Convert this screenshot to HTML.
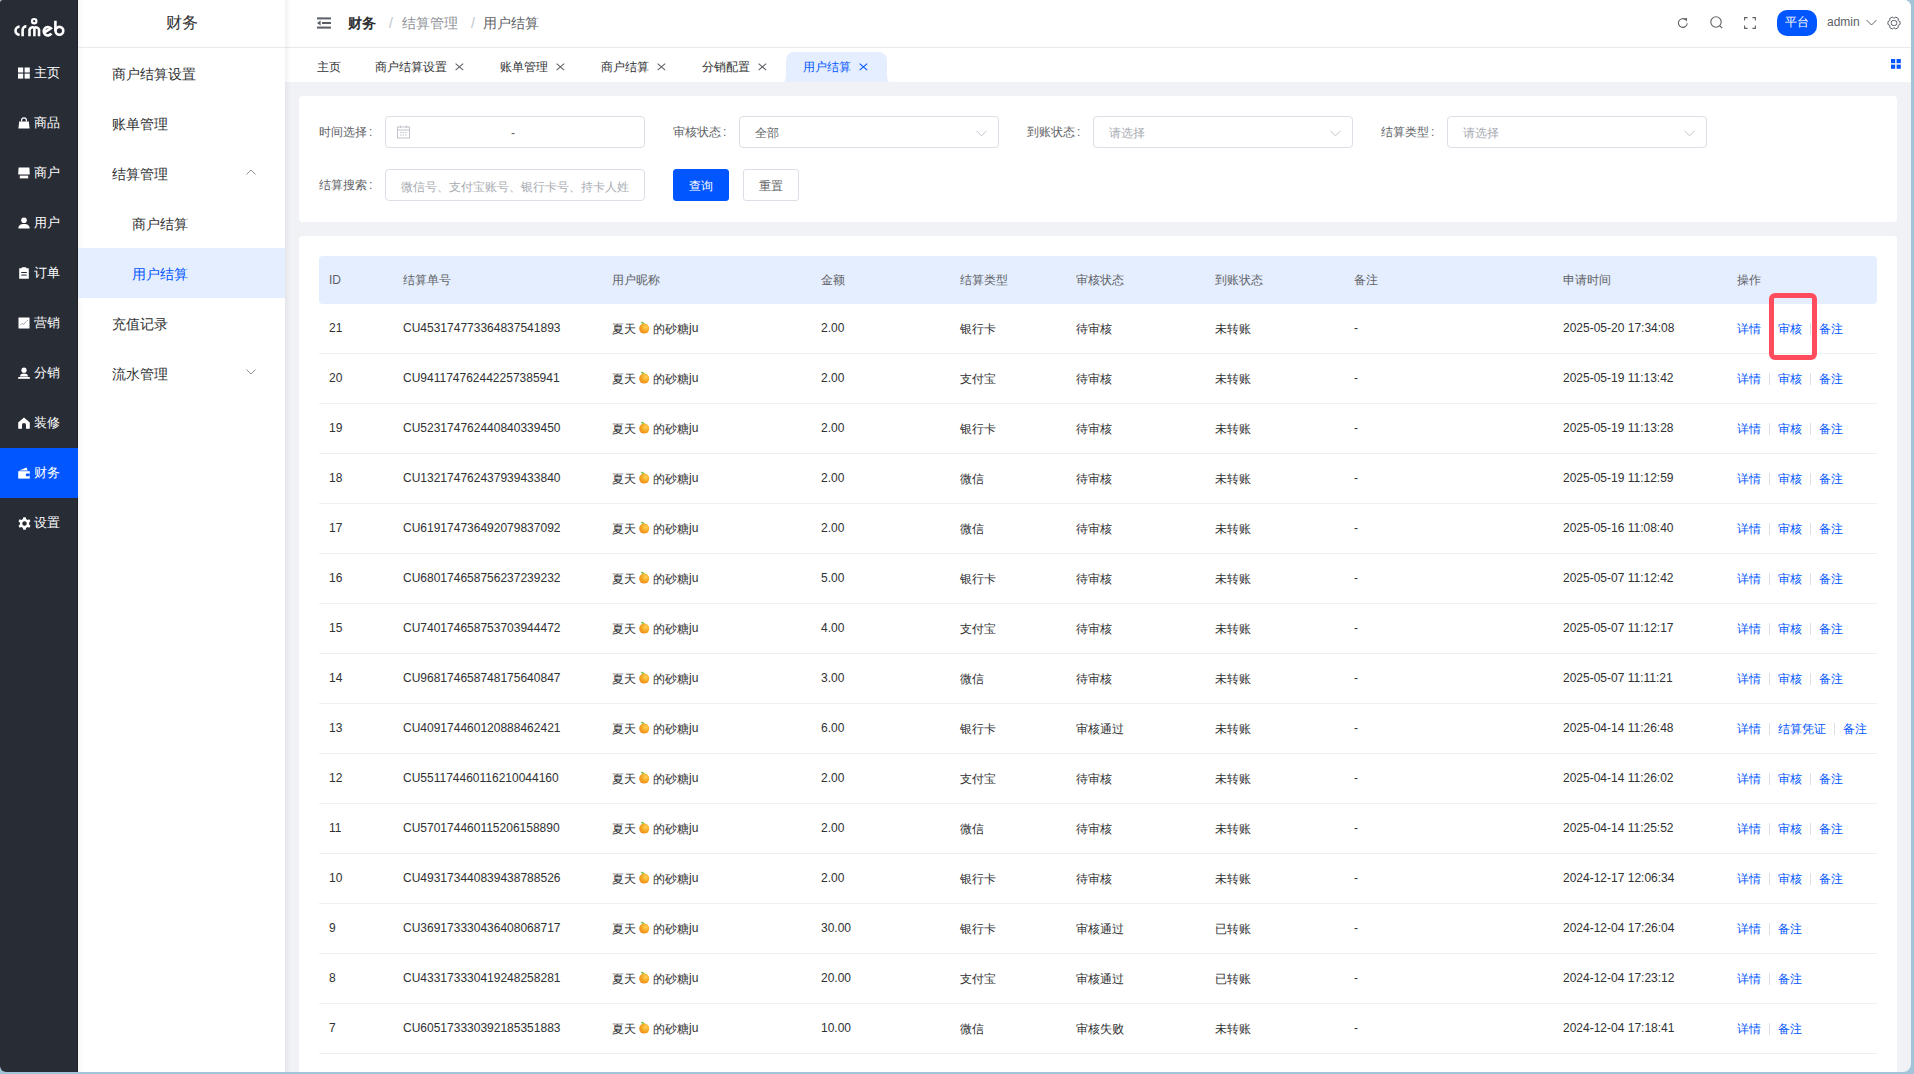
<!DOCTYPE html>
<html><head><meta charset="utf-8">
<style>
*{box-sizing:border-box;margin:0;padding:0}
html,body{width:1914px;height:1074px;overflow:hidden;background:#a2c3d8;font-family:"Liberation Sans",sans-serif;}
#win{position:absolute;left:0;top:0;width:1911px;height:1072px;background:#f0f2f5;overflow:hidden;border-radius:3px 7px 8px 6px}
#side{position:absolute;left:0;top:0;width:78px;height:1072px;background:#282c35;border-right:1px solid #1d2027}
.si{position:absolute;left:0;width:77px;height:50px;color:#fff;font-size:13px;line-height:50px;}
.si svg{position:absolute;left:18px;top:19px}
.si span{position:absolute;left:34px;top:0}
.si.on{background:#0256ff;width:78px}
#sub{position:absolute;left:78px;top:0;width:207px;height:1072px;background:#fff;background-image:linear-gradient(to right,rgba(0,0,0,0.03),rgba(0,0,0,0) 5px)}
#sub .ttl{position:absolute;left:0;top:0;width:207px;height:48px;line-height:46px;text-align:center;font-size:16px;color:#303133;border-bottom:1px solid #e8eaef}
.mi{position:absolute;left:0;width:207px;height:50px;line-height:50px;font-size:14px;color:#303133}
.mi span{position:absolute;left:34px;top:1px}
.mi.l2 span{left:54px}
.mi.on{background:#e5eeff;color:#0256ff}
.mi svg{position:absolute;left:168px;top:21px}
#hdr{position:absolute;left:286px;top:0;width:1625px;height:48px;background:#fff;border-bottom:1px solid #e8eaf0}
#hdr .bc{position:absolute;top:15px;font-size:14px;line-height:16px;white-space:nowrap}
#tabs{position:absolute;left:286px;top:48px;width:1625px;height:34px;background:#fff}
.tab{position:absolute;top:0;height:34px;font-size:12px;color:#303133}
.tab span{position:absolute;top:12px;line-height:14px;white-space:nowrap}
.tab .x{position:absolute;top:15px}
.card{position:absolute;left:299px;width:1598px;background:#fff;border-radius:4px}
.lbl{position:absolute;font-size:12px;color:#606266;line-height:14px;white-space:nowrap}
.inp{position:absolute;height:32px;border:1px solid #dcdfe6;border-radius:4px;background:#fff;font-size:12px;line-height:30px;white-space:nowrap}
.inp span{position:absolute;left:15px;top:1px}
.ph{color:#a8abb2}
.arr{position:absolute;right:11px;top:13px}
.btn{position:absolute;height:32px;border-radius:3px;font-size:12px;line-height:32px;text-align:center}
table{position:absolute;left:319px;top:256px;border-collapse:separate;border-spacing:0;table-layout:fixed;width:1558px;font-size:12px}
th{height:48px;background:#e5eeff;color:#606266;font-weight:normal;text-align:left;padding:0 10px;}
th:first-child{border-radius:4px 0 0 4px}
th:last-child{border-radius:0 4px 4px 0}
td{height:50px;border-bottom:1px solid #f0f0f0;color:#303133;text-align:left;padding:0 10px 1px;white-space:nowrap}
.org{vertical-align:-2px;margin:0 3px 0 3px}
.lk{color:#0256ff}
.c{position:relative;top:1px}
.dv{display:inline-block;width:1px;height:12px;background:#dcdfe6;margin:0 8px;vertical-align:-3px}
#hl{position:absolute;left:1769px;top:293px;width:48px;height:67px;border:5px solid #ff4d5e;border-radius:6px}
</style></head><body>
<div id="win">
  <div id="side">
    <svg style="position:absolute;left:0;top:0" width="78" height="47" viewBox="0 0 78 47">
      <g fill="none" stroke="#fff" stroke-width="2.6" stroke-linecap="butt">
        <path d="M19.6 26.6 A4.1 4.1 0 0 0 19.6 34.8"/>
        <path d="M22.6 36.2 V30 A3.6 3.6 0 0 1 26.4 26.4"/>
        <path d="M29.5 36.2 V29.6 A3.2 3.2 0 0 1 34.4 27.8 A3.2 3.2 0 0 1 39 29.6 V36.2 M34.4 28 V36.2"/>
        <circle cx="34.2" cy="21.2" r="2.2" stroke-width="2.2"/>
        <path d="M44.2 32.6 L50.8 28.2 A4.2 4.2 0 1 0 51.4 33.6"/>
        <path d="M55.4 20.8 V31"/><circle cx="59.4" cy="30.8" r="3.9"/>
      </g>
    </svg>
    <div class="si" style="top:48px"><svg width="12" height="12" viewBox="0 0 12 12"><rect x="0" y="0.5" width="5.2" height="5" fill="#fff"/><rect x="6.6" y="0.5" width="5.2" height="5" fill="#fff"/><rect x="0" y="6.6" width="5.2" height="5" fill="#fff"/><rect x="6.6" y="6.6" width="5.2" height="5" fill="#fff"/></svg><span>主页</span></div>
<div class="si" style="top:98px"><svg width="12" height="12" viewBox="0 0 12 12"><path d="M3.6 4.6 V3.2 A2.4 2.4 0 0 1 8.4 3.2 V4.6" fill="none" stroke="#fff" stroke-width="1.2"/><path d="M1.2 4.4 H10.8 L11.6 11.6 H0.4Z" fill="#fff"/></svg><span>商品</span></div>
<div class="si" style="top:148px"><svg width="12" height="12" viewBox="0 0 12 12"><path d="M0.6 0.6 H11.4 L11.8 7.6 H0.2Z" fill="#fff"/><rect x="1.8" y="8.6" width="8.4" height="2.8" fill="#fff"/></svg><span>商户</span></div>
<div class="si" style="top:198px"><svg width="12" height="12" viewBox="0 0 12 12"><circle cx="6" cy="3.2" r="2.8" fill="#fff"/><path d="M0.3 11.6 C0.3 8.2 2.6 6.9 6 6.9 C9.4 6.9 11.7 8.2 11.7 11.6Z" fill="#fff"/></svg><span>用户</span></div>
<div class="si" style="top:248px"><svg width="12" height="12" viewBox="0 0 12 12"><path d="M1.2 1.2 H3.8 V0.2 H8.2 V1.2 H10.8 V11.8 H1.2Z" fill="#fff"/><rect x="3.2" y="5" width="5.6" height="1" fill="#282c35"/><rect x="3.2" y="7.6" width="5.6" height="1" fill="#282c35"/></svg><span>订单</span></div>
<div class="si" style="top:298px"><svg width="12" height="12" viewBox="0 0 12 12"><rect x="0.5" y="0.5" width="11" height="11" fill="#fff"/><path d="M2 8.4 L4 6.4 L5.6 7.4 L8.4 4.4" fill="none" stroke="#7a7e86" stroke-width="0.7"/><circle cx="9.6" cy="3.6" r="0.5" fill="#7a7e86"/></svg><span>营销</span></div>
<div class="si" style="top:348px"><svg width="12" height="12" viewBox="0 0 12 12"><circle cx="6" cy="3.2" r="2.6" fill="#fff"/><path d="M2 9.4 C2 7.2 3.6 6.4 6 6.4 C8.4 6.4 10 7.2 10 9.4Z" fill="#fff"/><rect x="0.2" y="10" width="11.6" height="1.8" fill="#fff"/></svg><span>分销</span></div>
<div class="si" style="top:398px"><svg width="12" height="12" viewBox="0 0 12 12"><path d="M6 0.4 L11.8 5.4 V11.8 H8 V8 A2 2 0 0 0 4 8 V11.8 H0.2 V5.4Z" fill="#fff"/></svg><span>装修</span></div>
<div class="si on" style="top:448px"><svg width="12" height="12" viewBox="0 0 12 12"><path d="M1 3.6 L8.6 0.6 L9.6 3.6Z" fill="#fff"/><path d="M0.2 4.2 H11.8 V11.6 H0.2Z" fill="#fff"/><rect x="7.8" y="6.6" width="4" height="2.6" rx="1" fill="#0256ff"/></svg><span>财务</span></div>
<div class="si" style="top:498px"><svg width="13" height="13" viewBox="0 0 13 13"><path d="M5.3 0.3 H7.7 L8.1 2.1 L9.6 2.9 L11.3 2.2 L12.5 4.3 L11.1 5.5 V7.5 L12.5 8.7 L11.3 10.8 L9.6 10.1 L8.1 10.9 L7.7 12.7 H5.3 L4.9 10.9 L3.4 10.1 L1.7 10.8 L0.5 8.7 L1.9 7.5 V5.5 L0.5 4.3 L1.7 2.2 L3.4 2.9 L4.9 2.1Z" fill="#fff"/><circle cx="6.5" cy="6.5" r="2.2" fill="#282c35"/></svg><span>设置</span></div>
  </div>
  <div id="sub">
    <div class="ttl">财务</div>
    <div class="mi " style="top:48px"><span>商户结算设置</span></div>
<div class="mi " style="top:98px"><span>账单管理</span></div>
<div class="mi " style="top:148px"><span>结算管理</span><svg width="10" height="6" viewBox="0 0 10 6"><path d="M0.5 5.5 L5 1 L9.5 5.5" fill="none" stroke="#909399" stroke-width="1"/></svg></div>
<div class="mi l2" style="top:198px"><span>商户结算</span></div>
<div class="mi l2 on" style="top:248px"><span>用户结算</span></div>
<div class="mi " style="top:298px"><span>充值记录</span></div>
<div class="mi " style="top:348px"><span>流水管理</span><svg width="10" height="6" viewBox="0 0 10 6"><path d="M0.5 0.5 L5 5 L9.5 0.5" fill="none" stroke="#909399" stroke-width="1"/></svg></div>
  </div>
  <div id="hdr">
    
<svg style="position:absolute;left:31px;top:17px" width="14" height="12" viewBox="0 0 14 12"><g fill="#5a5e66"><rect x="0" y="0.4" width="14" height="2"/><rect x="5" y="5" width="9" height="2"/><rect x="0" y="9.6" width="14" height="2"/><path d="M0 6 L3.6 3.4 V8.6Z"/></g></svg>
<div class="bc" style="left:62px;color:#303133;font-weight:bold">财务</div>
<div class="bc" style="left:103px;color:#c0c4cc">/</div>
<div class="bc" style="left:116px;color:#909399">结算管理</div>
<div class="bc" style="left:185px;color:#c0c4cc">/</div>
<div class="bc" style="left:197px;color:#606266">用户结算</div>
<svg style="position:absolute;left:1391px;top:17px" width="12" height="12" viewBox="0 0 12 12"><path d="M10.2 6.2 A4.4 4.4 0 1 1 8.6 2.6" fill="none" stroke="#606266" stroke-width="1.1"/><path d="M6.6 1.4 L10.2 1 L9.8 4.6Z" fill="#606266"/></svg>
<svg style="position:absolute;left:1424px;top:16px" width="13" height="13" viewBox="0 0 13 13"><circle cx="6" cy="6" r="5.2" fill="none" stroke="#606266" stroke-width="1.1"/><path d="M9.8 9.8 L12.2 12.2" stroke="#606266" stroke-width="1.2"/></svg>
<svg style="position:absolute;left:1458px;top:17px" width="12" height="12" viewBox="0 0 12 12"><g fill="none" stroke="#606266" stroke-width="1.1"><path d="M0.6 3.6 V0.6 H3.6"/><path d="M8.4 0.6 H11.4 V3.6"/><path d="M11.4 8.4 V11.4 H8.4"/><path d="M3.6 11.4 H0.6 V8.4"/></g></svg>
<div style="position:absolute;left:1491px;top:10px;width:40px;height:26px;border-radius:10px;background:#0256ff;color:#fff;font-size:12px;line-height:25px;text-align:center">平台</div>
<div style="position:absolute;left:1541px;top:15px;font-size:12px;line-height:14px;color:#606266">admin</div>
<svg style="position:absolute;left:1580px;top:19px" width="11" height="7" viewBox="0 0 11 7"><path d="M0.5 1 L5.5 6 L10.5 1" fill="none" stroke="#606266" stroke-width="1"/></svg>
<svg style="position:absolute;left:1601px;top:16px" width="14" height="14" viewBox="0 0 14 14"><path d="M11.33 9.30 L13.04 8.39 L13.04 5.61 L11.33 4.70 L11.16 4.40 L11.23 2.47 L8.81 1.07 L7.17 2.10 L6.83 2.10 L5.19 1.07 L2.77 2.47 L2.84 4.40 L2.67 4.70 L0.96 5.61 L0.96 8.39 L2.67 9.30 L2.84 9.60 L2.77 11.53 L5.19 12.93 L6.83 11.90 L7.17 11.90 L8.81 12.93 L11.23 11.53 L11.16 9.60Z" fill="none" stroke="#5a5e66" stroke-width="1" stroke-linejoin="round"/><rect x="4.3" y="4.5" width="5.4" height="5" rx="2" fill="none" stroke="#5a5e66" stroke-width="1"/></svg>

  </div>
  <div id="tabs">
    <div class="tab" style="left:14px;width:58px"><span style="left:17px">主页</span></div>
<div class="tab" style="left:72px;width:125px"><span style="left:17px">商户结算设置</span><svg class="x" style="left:97px" width="9" height="8" viewBox="0 0 9 8"><path d="M0.6 0.6 L8.2 7.2 M8.2 0.6 L0.6 7.2" stroke="#606266" stroke-width="1.1"/></svg></div>
<div class="tab" style="left:197px;width:101px"><span style="left:17px">账单管理</span><svg class="x" style="left:73px" width="9" height="8" viewBox="0 0 9 8"><path d="M0.6 0.6 L8.2 7.2 M8.2 0.6 L0.6 7.2" stroke="#606266" stroke-width="1.1"/></svg></div>
<div class="tab" style="left:298px;width:101px"><span style="left:17px">商户结算</span><svg class="x" style="left:73px" width="9" height="8" viewBox="0 0 9 8"><path d="M0.6 0.6 L8.2 7.2 M8.2 0.6 L0.6 7.2" stroke="#606266" stroke-width="1.1"/></svg></div>
<div class="tab" style="left:399px;width:101px"><span style="left:17px">分销配置</span><svg class="x" style="left:73px" width="9" height="8" viewBox="0 0 9 8"><path d="M0.6 0.6 L8.2 7.2 M8.2 0.6 L0.6 7.2" stroke="#606266" stroke-width="1.1"/></svg></div>
<div class="tab" style="left:500px;width:101px;color:#0256ff"><svg style="position:absolute;left:-3px;top:4px" width="107" height="30" viewBox="0 0 107 30"><path d="M0 30 C2.6 30 3 26 3 20 V8 A8 8 0 0 1 11 0 H96 A8 8 0 0 1 104 8 V20 C104 26 104.4 30 107 30Z" fill="#e5eeff"/></svg><span style="left:17px">用户结算</span><svg class="x" style="left:73px" width="9" height="8" viewBox="0 0 9 8"><path d="M0.6 0.6 L8.2 7.2 M8.2 0.6 L0.6 7.2" stroke="#0256ff" stroke-width="1.1"/></svg></div>
<svg style="position:absolute;left:1605px;top:11px" width="10" height="10" viewBox="0 0 10 10"><g fill="#0256ff"><rect x="0" y="0" width="4.2" height="4.2"/><rect x="5.6" y="0" width="4.2" height="4.2"/><rect x="0" y="5.6" width="4.2" height="4.2"/><rect x="5.6" y="5.6" width="4.2" height="4.2"/></g></svg>
  </div>
  <div class="card" style="top:96px;height:126px">
  </div>
  <div class="lbl" style="left:319px;top:125px">时间选择<span style="margin-left:2px">:</span></div>
<div class="inp" style="left:385px;top:116px;width:260px"><svg style="position:absolute;left:11px;top:8px" width="13" height="14" viewBox="0 0 13 14"><g fill="none" stroke="#c0c4cc" stroke-width="1"><rect x="0.5" y="2" width="12" height="11"/><path d="M0.5 5 H12.5 M3.5 0.5 V3 M9.5 0.5 V3"/><path d="M3 7.5 H10 M3 10 H10" stroke-dasharray="1.5 1"/></g></svg><span style="left:125px;color:#606266">-</span></div>
<div class="lbl" style="left:673px;top:125px">审核状态<span style="margin-left:2px">:</span></div>
<div class="inp" style="left:739px;top:116px;width:260px"><span style="color:#606266">全部</span><svg class="arr" width="11" height="7" viewBox="0 0 11 7"><path d="M0.5 0.8 L5.5 5.8 L10.5 0.8" fill="none" stroke="#c0c4cc" stroke-width="1"/></svg></div>
<div class="lbl" style="left:1027px;top:125px">到账状态<span style="margin-left:2px">:</span></div>
<div class="inp" style="left:1093px;top:116px;width:260px"><span class="ph">请选择</span><svg class="arr" width="11" height="7" viewBox="0 0 11 7"><path d="M0.5 0.8 L5.5 5.8 L10.5 0.8" fill="none" stroke="#c0c4cc" stroke-width="1"/></svg></div>
<div class="lbl" style="left:1381px;top:125px">结算类型<span style="margin-left:2px">:</span></div>
<div class="inp" style="left:1447px;top:116px;width:260px"><span class="ph">请选择</span><svg class="arr" width="11" height="7" viewBox="0 0 11 7"><path d="M0.5 0.8 L5.5 5.8 L10.5 0.8" fill="none" stroke="#c0c4cc" stroke-width="1"/></svg></div>
<div class="lbl" style="left:319px;top:178px">结算搜索<span style="margin-left:2px">:</span></div>
<div class="inp" style="left:385px;top:169px;width:260px"><span class="ph" style="top:2px">微信号、支付宝账号、银行卡号、持卡人姓</span></div>
<div class="btn" style="left:673px;top:169px;width:56px;background:#0256ff;color:#fff;border:1px solid #0256ff">查询</div>
<div class="btn" style="left:743px;top:169px;width:56px;background:#fff;color:#606266;border:1px solid #dcdfe6">重置</div>
  <div class="card" style="top:236px;height:840px"></div>
  <table>
    <colgroup><col style="width:74px"><col style="width:209px"><col style="width:209px"><col style="width:139px"><col style="width:116px"><col style="width:139px"><col style="width:139px"><col style="width:209px"><col style="width:174px"><col style="width:150px"></colgroup>
    <thead><tr><th>ID</th><th>结算单号</th><th>用户昵称</th><th>金额</th><th>结算类型</th><th>审核状态</th><th>到账状态</th><th>备注</th><th>申请时间</th><th>操作</th></tr></thead>
    <tbody>
<tr><td>21</td><td>CU453174773364837541893</td><td><span class="c">夏天</span><svg class="org" width="11" height="13" viewBox="0 0 11 13"><defs><radialGradient id="og" cx="0.65" cy="0.35" r="0.7"><stop offset="0" stop-color="#ffd45a"/><stop offset="0.6" stop-color="#f5a623"/><stop offset="1" stop-color="#f08a1c"/></radialGradient></defs><circle cx="5.2" cy="7.6" r="5" fill="url(#og)"/><path d="M1.6 1 C3.2 0.4 5 1.2 5.6 2.8 C4 3.2 2.4 2.6 1.6 1Z" fill="#7cc242"/></svg><span class="c">的砂糖</span>ju</td><td>2.00</td><td><span class="c">银行卡</span></td><td><span class="c">待审核</span></td><td><span class="c">未转账</span></td><td>-</td><td>2025-05-20 17:34:08</td><td><span class="lk"><span class="c">详情</span></span><i class="dv"></i><span class="lk"><span class="c">审核</span></span><i class="dv"></i><span class="lk"><span class="c">备注</span></span></td></tr>
<tr><td>20</td><td>CU941174762442257385941</td><td><span class="c">夏天</span><svg class="org" width="11" height="13" viewBox="0 0 11 13"><defs><radialGradient id="og" cx="0.65" cy="0.35" r="0.7"><stop offset="0" stop-color="#ffd45a"/><stop offset="0.6" stop-color="#f5a623"/><stop offset="1" stop-color="#f08a1c"/></radialGradient></defs><circle cx="5.2" cy="7.6" r="5" fill="url(#og)"/><path d="M1.6 1 C3.2 0.4 5 1.2 5.6 2.8 C4 3.2 2.4 2.6 1.6 1Z" fill="#7cc242"/></svg><span class="c">的砂糖</span>ju</td><td>2.00</td><td><span class="c">支付宝</span></td><td><span class="c">待审核</span></td><td><span class="c">未转账</span></td><td>-</td><td>2025-05-19 11:13:42</td><td><span class="lk"><span class="c">详情</span></span><i class="dv"></i><span class="lk"><span class="c">审核</span></span><i class="dv"></i><span class="lk"><span class="c">备注</span></span></td></tr>
<tr><td>19</td><td>CU523174762440840339450</td><td><span class="c">夏天</span><svg class="org" width="11" height="13" viewBox="0 0 11 13"><defs><radialGradient id="og" cx="0.65" cy="0.35" r="0.7"><stop offset="0" stop-color="#ffd45a"/><stop offset="0.6" stop-color="#f5a623"/><stop offset="1" stop-color="#f08a1c"/></radialGradient></defs><circle cx="5.2" cy="7.6" r="5" fill="url(#og)"/><path d="M1.6 1 C3.2 0.4 5 1.2 5.6 2.8 C4 3.2 2.4 2.6 1.6 1Z" fill="#7cc242"/></svg><span class="c">的砂糖</span>ju</td><td>2.00</td><td><span class="c">银行卡</span></td><td><span class="c">待审核</span></td><td><span class="c">未转账</span></td><td>-</td><td>2025-05-19 11:13:28</td><td><span class="lk"><span class="c">详情</span></span><i class="dv"></i><span class="lk"><span class="c">审核</span></span><i class="dv"></i><span class="lk"><span class="c">备注</span></span></td></tr>
<tr><td>18</td><td>CU132174762437939433840</td><td><span class="c">夏天</span><svg class="org" width="11" height="13" viewBox="0 0 11 13"><defs><radialGradient id="og" cx="0.65" cy="0.35" r="0.7"><stop offset="0" stop-color="#ffd45a"/><stop offset="0.6" stop-color="#f5a623"/><stop offset="1" stop-color="#f08a1c"/></radialGradient></defs><circle cx="5.2" cy="7.6" r="5" fill="url(#og)"/><path d="M1.6 1 C3.2 0.4 5 1.2 5.6 2.8 C4 3.2 2.4 2.6 1.6 1Z" fill="#7cc242"/></svg><span class="c">的砂糖</span>ju</td><td>2.00</td><td><span class="c">微信</span></td><td><span class="c">待审核</span></td><td><span class="c">未转账</span></td><td>-</td><td>2025-05-19 11:12:59</td><td><span class="lk"><span class="c">详情</span></span><i class="dv"></i><span class="lk"><span class="c">审核</span></span><i class="dv"></i><span class="lk"><span class="c">备注</span></span></td></tr>
<tr><td>17</td><td>CU619174736492079837092</td><td><span class="c">夏天</span><svg class="org" width="11" height="13" viewBox="0 0 11 13"><defs><radialGradient id="og" cx="0.65" cy="0.35" r="0.7"><stop offset="0" stop-color="#ffd45a"/><stop offset="0.6" stop-color="#f5a623"/><stop offset="1" stop-color="#f08a1c"/></radialGradient></defs><circle cx="5.2" cy="7.6" r="5" fill="url(#og)"/><path d="M1.6 1 C3.2 0.4 5 1.2 5.6 2.8 C4 3.2 2.4 2.6 1.6 1Z" fill="#7cc242"/></svg><span class="c">的砂糖</span>ju</td><td>2.00</td><td><span class="c">微信</span></td><td><span class="c">待审核</span></td><td><span class="c">未转账</span></td><td>-</td><td>2025-05-16 11:08:40</td><td><span class="lk"><span class="c">详情</span></span><i class="dv"></i><span class="lk"><span class="c">审核</span></span><i class="dv"></i><span class="lk"><span class="c">备注</span></span></td></tr>
<tr><td>16</td><td>CU680174658756237239232</td><td><span class="c">夏天</span><svg class="org" width="11" height="13" viewBox="0 0 11 13"><defs><radialGradient id="og" cx="0.65" cy="0.35" r="0.7"><stop offset="0" stop-color="#ffd45a"/><stop offset="0.6" stop-color="#f5a623"/><stop offset="1" stop-color="#f08a1c"/></radialGradient></defs><circle cx="5.2" cy="7.6" r="5" fill="url(#og)"/><path d="M1.6 1 C3.2 0.4 5 1.2 5.6 2.8 C4 3.2 2.4 2.6 1.6 1Z" fill="#7cc242"/></svg><span class="c">的砂糖</span>ju</td><td>5.00</td><td><span class="c">银行卡</span></td><td><span class="c">待审核</span></td><td><span class="c">未转账</span></td><td>-</td><td>2025-05-07 11:12:42</td><td><span class="lk"><span class="c">详情</span></span><i class="dv"></i><span class="lk"><span class="c">审核</span></span><i class="dv"></i><span class="lk"><span class="c">备注</span></span></td></tr>
<tr><td>15</td><td>CU740174658753703944472</td><td><span class="c">夏天</span><svg class="org" width="11" height="13" viewBox="0 0 11 13"><defs><radialGradient id="og" cx="0.65" cy="0.35" r="0.7"><stop offset="0" stop-color="#ffd45a"/><stop offset="0.6" stop-color="#f5a623"/><stop offset="1" stop-color="#f08a1c"/></radialGradient></defs><circle cx="5.2" cy="7.6" r="5" fill="url(#og)"/><path d="M1.6 1 C3.2 0.4 5 1.2 5.6 2.8 C4 3.2 2.4 2.6 1.6 1Z" fill="#7cc242"/></svg><span class="c">的砂糖</span>ju</td><td>4.00</td><td><span class="c">支付宝</span></td><td><span class="c">待审核</span></td><td><span class="c">未转账</span></td><td>-</td><td>2025-05-07 11:12:17</td><td><span class="lk"><span class="c">详情</span></span><i class="dv"></i><span class="lk"><span class="c">审核</span></span><i class="dv"></i><span class="lk"><span class="c">备注</span></span></td></tr>
<tr><td>14</td><td>CU968174658748175640847</td><td><span class="c">夏天</span><svg class="org" width="11" height="13" viewBox="0 0 11 13"><defs><radialGradient id="og" cx="0.65" cy="0.35" r="0.7"><stop offset="0" stop-color="#ffd45a"/><stop offset="0.6" stop-color="#f5a623"/><stop offset="1" stop-color="#f08a1c"/></radialGradient></defs><circle cx="5.2" cy="7.6" r="5" fill="url(#og)"/><path d="M1.6 1 C3.2 0.4 5 1.2 5.6 2.8 C4 3.2 2.4 2.6 1.6 1Z" fill="#7cc242"/></svg><span class="c">的砂糖</span>ju</td><td>3.00</td><td><span class="c">微信</span></td><td><span class="c">待审核</span></td><td><span class="c">未转账</span></td><td>-</td><td>2025-05-07 11:11:21</td><td><span class="lk"><span class="c">详情</span></span><i class="dv"></i><span class="lk"><span class="c">审核</span></span><i class="dv"></i><span class="lk"><span class="c">备注</span></span></td></tr>
<tr><td>13</td><td>CU409174460120888462421</td><td><span class="c">夏天</span><svg class="org" width="11" height="13" viewBox="0 0 11 13"><defs><radialGradient id="og" cx="0.65" cy="0.35" r="0.7"><stop offset="0" stop-color="#ffd45a"/><stop offset="0.6" stop-color="#f5a623"/><stop offset="1" stop-color="#f08a1c"/></radialGradient></defs><circle cx="5.2" cy="7.6" r="5" fill="url(#og)"/><path d="M1.6 1 C3.2 0.4 5 1.2 5.6 2.8 C4 3.2 2.4 2.6 1.6 1Z" fill="#7cc242"/></svg><span class="c">的砂糖</span>ju</td><td>6.00</td><td><span class="c">银行卡</span></td><td><span class="c">审核通过</span></td><td><span class="c">未转账</span></td><td>-</td><td>2025-04-14 11:26:48</td><td><span class="lk"><span class="c">详情</span></span><i class="dv"></i><span class="lk"><span class="c">结算凭证</span></span><i class="dv"></i><span class="lk"><span class="c">备注</span></span></td></tr>
<tr><td>12</td><td>CU551174460116210044160</td><td><span class="c">夏天</span><svg class="org" width="11" height="13" viewBox="0 0 11 13"><defs><radialGradient id="og" cx="0.65" cy="0.35" r="0.7"><stop offset="0" stop-color="#ffd45a"/><stop offset="0.6" stop-color="#f5a623"/><stop offset="1" stop-color="#f08a1c"/></radialGradient></defs><circle cx="5.2" cy="7.6" r="5" fill="url(#og)"/><path d="M1.6 1 C3.2 0.4 5 1.2 5.6 2.8 C4 3.2 2.4 2.6 1.6 1Z" fill="#7cc242"/></svg><span class="c">的砂糖</span>ju</td><td>2.00</td><td><span class="c">支付宝</span></td><td><span class="c">待审核</span></td><td><span class="c">未转账</span></td><td>-</td><td>2025-04-14 11:26:02</td><td><span class="lk"><span class="c">详情</span></span><i class="dv"></i><span class="lk"><span class="c">审核</span></span><i class="dv"></i><span class="lk"><span class="c">备注</span></span></td></tr>
<tr><td>11</td><td>CU570174460115206158890</td><td><span class="c">夏天</span><svg class="org" width="11" height="13" viewBox="0 0 11 13"><defs><radialGradient id="og" cx="0.65" cy="0.35" r="0.7"><stop offset="0" stop-color="#ffd45a"/><stop offset="0.6" stop-color="#f5a623"/><stop offset="1" stop-color="#f08a1c"/></radialGradient></defs><circle cx="5.2" cy="7.6" r="5" fill="url(#og)"/><path d="M1.6 1 C3.2 0.4 5 1.2 5.6 2.8 C4 3.2 2.4 2.6 1.6 1Z" fill="#7cc242"/></svg><span class="c">的砂糖</span>ju</td><td>2.00</td><td><span class="c">微信</span></td><td><span class="c">待审核</span></td><td><span class="c">未转账</span></td><td>-</td><td>2025-04-14 11:25:52</td><td><span class="lk"><span class="c">详情</span></span><i class="dv"></i><span class="lk"><span class="c">审核</span></span><i class="dv"></i><span class="lk"><span class="c">备注</span></span></td></tr>
<tr><td>10</td><td>CU493173440839438788526</td><td><span class="c">夏天</span><svg class="org" width="11" height="13" viewBox="0 0 11 13"><defs><radialGradient id="og" cx="0.65" cy="0.35" r="0.7"><stop offset="0" stop-color="#ffd45a"/><stop offset="0.6" stop-color="#f5a623"/><stop offset="1" stop-color="#f08a1c"/></radialGradient></defs><circle cx="5.2" cy="7.6" r="5" fill="url(#og)"/><path d="M1.6 1 C3.2 0.4 5 1.2 5.6 2.8 C4 3.2 2.4 2.6 1.6 1Z" fill="#7cc242"/></svg><span class="c">的砂糖</span>ju</td><td>2.00</td><td><span class="c">银行卡</span></td><td><span class="c">待审核</span></td><td><span class="c">未转账</span></td><td>-</td><td>2024-12-17 12:06:34</td><td><span class="lk"><span class="c">详情</span></span><i class="dv"></i><span class="lk"><span class="c">审核</span></span><i class="dv"></i><span class="lk"><span class="c">备注</span></span></td></tr>
<tr><td>9</td><td>CU369173330436408068717</td><td><span class="c">夏天</span><svg class="org" width="11" height="13" viewBox="0 0 11 13"><defs><radialGradient id="og" cx="0.65" cy="0.35" r="0.7"><stop offset="0" stop-color="#ffd45a"/><stop offset="0.6" stop-color="#f5a623"/><stop offset="1" stop-color="#f08a1c"/></radialGradient></defs><circle cx="5.2" cy="7.6" r="5" fill="url(#og)"/><path d="M1.6 1 C3.2 0.4 5 1.2 5.6 2.8 C4 3.2 2.4 2.6 1.6 1Z" fill="#7cc242"/></svg><span class="c">的砂糖</span>ju</td><td>30.00</td><td><span class="c">银行卡</span></td><td><span class="c">审核通过</span></td><td><span class="c">已转账</span></td><td>-</td><td>2024-12-04 17:26:04</td><td><span class="lk"><span class="c">详情</span></span><i class="dv"></i><span class="lk"><span class="c">备注</span></span></td></tr>
<tr><td>8</td><td>CU433173330419248258281</td><td><span class="c">夏天</span><svg class="org" width="11" height="13" viewBox="0 0 11 13"><defs><radialGradient id="og" cx="0.65" cy="0.35" r="0.7"><stop offset="0" stop-color="#ffd45a"/><stop offset="0.6" stop-color="#f5a623"/><stop offset="1" stop-color="#f08a1c"/></radialGradient></defs><circle cx="5.2" cy="7.6" r="5" fill="url(#og)"/><path d="M1.6 1 C3.2 0.4 5 1.2 5.6 2.8 C4 3.2 2.4 2.6 1.6 1Z" fill="#7cc242"/></svg><span class="c">的砂糖</span>ju</td><td>20.00</td><td><span class="c">支付宝</span></td><td><span class="c">审核通过</span></td><td><span class="c">已转账</span></td><td>-</td><td>2024-12-04 17:23:12</td><td><span class="lk"><span class="c">详情</span></span><i class="dv"></i><span class="lk"><span class="c">备注</span></span></td></tr>
<tr><td>7</td><td>CU605173330392185351883</td><td><span class="c">夏天</span><svg class="org" width="11" height="13" viewBox="0 0 11 13"><defs><radialGradient id="og" cx="0.65" cy="0.35" r="0.7"><stop offset="0" stop-color="#ffd45a"/><stop offset="0.6" stop-color="#f5a623"/><stop offset="1" stop-color="#f08a1c"/></radialGradient></defs><circle cx="5.2" cy="7.6" r="5" fill="url(#og)"/><path d="M1.6 1 C3.2 0.4 5 1.2 5.6 2.8 C4 3.2 2.4 2.6 1.6 1Z" fill="#7cc242"/></svg><span class="c">的砂糖</span>ju</td><td>10.00</td><td><span class="c">微信</span></td><td><span class="c">审核失败</span></td><td><span class="c">未转账</span></td><td>-</td><td>2024-12-04 17:18:41</td><td><span class="lk"><span class="c">详情</span></span><i class="dv"></i><span class="lk"><span class="c">备注</span></span></td></tr>
    </tbody>
  </table>
  <div style="position:absolute;left:285px;top:0;width:1px;height:82px;background:#fff"></div><div style="position:absolute;left:285px;top:47px;width:1px;height:1px;background:#e8eaf0"></div>
  <div id="hl"></div>
  <div style="position:absolute;left:285px;top:0;width:6px;height:1072px;background:linear-gradient(to right,rgba(0,0,0,0.05),rgba(0,0,0,0))"></div>
</div>
</body></html>
